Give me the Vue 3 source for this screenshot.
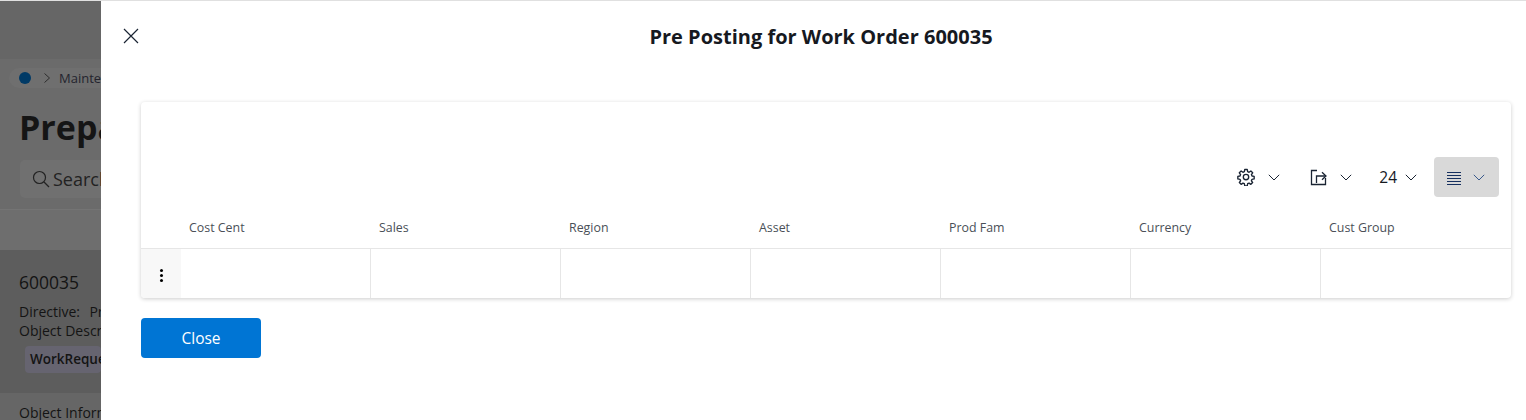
<script setup>
const columns = ['Cost Cent', 'Sales', 'Region', 'Asset', 'Prod Fam', 'Currency', 'Cust Group']
</script>

<template>
  <div class="page">
    <!-- dimmed page behind the drawer -->
    <div class="backdrop">
      <div class="bg-top">
        <div class="crumbs">
          <span class="home"></span>
          <svg class="crumb-arrow" width="8" height="12" viewBox="0 0 8 12"><path d="M1.5 1.5 6.5 6 1.5 10.5" fill="none" stroke="#2d2d2d" stroke-width="1"/></svg>
          <span class="crumb-text">Maintenance</span>
        </div>
        <div class="bg-title">Prepare</div>
        <div class="bg-search">
          <svg width="18" height="18" viewBox="0 0 18 18"><circle cx="7.5" cy="7.5" r="6" fill="none" stroke="#222" stroke-width="1.2"/><path d="M12 12l5 5" stroke="#222" stroke-width="1.2"/></svg>
          <span>Search</span>
        </div>
        <div class="bg-band"></div>
      </div>
      <div class="bg-card">
        <div class="bg-num">600035</div>
        <div class="bg-line first">Directive: &nbsp; Pre Posting</div>
        <div class="bg-line">Object Description</div>
        <div class="bg-tag">WorkRequest</div>
      </div>
      <div class="bg-bottom">Object Information</div>
    </div>

    <div class="drawer">
      <div class="header">
        <button class="close-x">
          <svg width="16" height="16" viewBox="0 0 16 16"><path d="M1 1l14 14M15 1 1 15" stroke="#1a2433" stroke-width="1.2" fill="none"/></svg>
        </button>
        <h1>Pre Posting for Work Order 600035</h1>
      </div>

      <div class="card">
        <div class="toolbar">
          <button class="tool gear">
            <svg width="18" height="18" viewBox="0 0 24 24" fill="none" stroke="#1a2433" stroke-width="1.8" stroke-linejoin="round"><circle cx="12" cy="12" r="3.6"/><path d="M10.3 2h3.4l.5 2.9 1.9.8 2.4-1.7 2.4 2.4-1.7 2.4.8 1.9 2.9.5v3.4l-2.9.5-.8 1.9 1.7 2.4-2.4 2.4-2.4-1.7-1.9.8-.5 2.9h-3.4l-.5-2.9-1.9-.8-2.4 1.7-2.4-2.4 1.7-2.4-.8-1.9-2.9-.5v-3.4l2.9-.5.8-1.9-1.7-2.4 2.4-2.4 2.4 1.7 1.9-.8z"/></svg>
            <svg class="chev" width="12" height="7" viewBox="0 0 12 7"><path d="M.8.8 6 6 11.2.8" fill="none" stroke="#1a2433" stroke-width="1"/></svg>
          </button>
          <button class="tool share">
            <svg width="17" height="17" viewBox="0 0 17 17" fill="none" stroke="#1a2433" stroke-width="1.3"><path d="M7 1.5H1.5v14h14V9"/><path d="M6.5 14V7h9"/><path d="M12 3.2 16 7l-4 3.8"/></svg>
            <svg class="chev" width="12" height="7" viewBox="0 0 12 7"><path d="M.8.8 6 6 11.2.8" fill="none" stroke="#1a2433" stroke-width="1"/></svg>
          </button>
          <button class="tool count">
            <span>24</span>
            <svg class="chev" width="12" height="7" viewBox="0 0 12 7"><path d="M.8.8 6 6 11.2.8" fill="none" stroke="#1a2433" stroke-width="1"/></svg>
          </button>
          <button class="tool density">
            <svg class="lines" width="14" height="14" viewBox="0 0 14 14" stroke="#16305f" stroke-width="1"><path d="M0 .5h14M0 3.5h14M0 6.5h14M0 9.5h14M0 12.5h14"/></svg>
            <svg class="chev" width="12" height="7" viewBox="0 0 12 7"><path d="M.8.8 6 6 11.2.8" fill="none" stroke="#3a5a8c" stroke-width="1"/></svg>
          </button>
        </div>

        <div class="table-row head">
          <div class="action-head"></div>
          <div v-for="col in columns" :key="col" class="th">{{ col }}</div>
        </div>
        <div class="table-row body">
          <div class="action-cell">
            <span class="dots"><i></i><i></i><i></i></span>
          </div>
          <div v-for="col in columns" :key="col" class="td"></div>
        </div>
      </div>

      <button class="close-btn">Close</button>
    </div>
  </div>
</template>

<style>
html, body {
  margin: 0;
  background: #fff;
}
</style>

<style scoped>
.page {
  display: flex;
  height: 420px;
  width: 1526px;
  overflow: hidden;
  font-family: "Open Sans", "Noto Sans", sans-serif;
  box-sizing: border-box;
  border-top: 1px solid #e0e0e0;
}

.backdrop {
  width: 101px;
  flex-shrink: 0;
  overflow: hidden;
  background: #666;
  white-space: nowrap;
  color: #141414;
}
.bg-top {
  height: 249px;
  box-sizing: border-box;
  padding-top: 67px;
  background: linear-gradient(#666 0, #666 58px, #6b6b6b 58px);
}
.crumbs {
  display: flex;
  align-items: center;
  height: 20px;
  margin-left: 9px;
  padding-left: 10px;
  border-radius: 10px 0 0 10px;
  background: #6f6f6f;
}
.home {
  flex-shrink: 0;
  width: 12px;
  height: 12px;
  border-radius: 50%;
  background: #003a66;
}
.crumb-arrow {
  flex-shrink: 0;
  margin-left: 12px;
}
.crumb-text {
  margin-left: 8px;
  font-size: 13px;
  color: #24242e;
}
.bg-title {
  margin: 15px 0 0 19px;
  font-size: 34px;
  font-weight: 700;
  line-height: 48px;
  color: #151515;
}
.bg-search {
  display: flex;
  align-items: center;
  gap: 3px;
  margin: 9px 0 0 20px;
  height: 38px;
  padding-left: 12px;
  border-radius: 5px 0 0 5px;
  background: #707070;
  font-size: 18px;
  color: #222;
}
.bg-search svg {
  flex-shrink: 0;
}
.bg-band {
  margin-top: 11px;
  height: 40px;
  border-top: 1px solid #747474;
  background: #6e6e6e;
}
.bg-card {
  height: 143px;
  box-sizing: border-box;
  padding: 20px 0 0 19px;
  background: #5d5d5d;
}
.bg-num {
  font-size: 17.5px;
  line-height: 24px;
}
.bg-line {
  font-size: 14px;
  line-height: 19px;
}
.bg-line.first {
  margin-top: 8px;
  word-spacing: -0.5px;
}
.bg-tag {
  margin: 6px 0 0 6px;
  padding: 0 5px;
  height: 27px;
  line-height: 27px;
  border-radius: 4px;
  background: #666470;
  font-size: 13.5px;
  font-weight: 600;
}
.bg-bottom {
  padding: 10px 0 0 19px;
  font-size: 14px;
  line-height: 19px;
}

.drawer {
  flex: 1;
  min-width: 0;
  background: #fff;
  padding-left: 40px;
  padding-right: 15px;
}

.header {
  display: flex;
  align-items: center;
  height: 70px;
  margin-left: -40px;
  padding-left: 22px;
}
.close-x {
  display: flex;
  width: 16px;
  height: 16px;
  padding: 0;
  border: 0;
  background: none;
}
h1 {
  flex: 1;
  margin: 0;
  padding-right: 8px;
  text-align: center;
  font-size: 20px;
  font-weight: 700;
  color: #16191f;
}

.card {
  margin-top: 31px;
  border-radius: 4px;
  box-shadow: 0 1px 4px rgba(0, 0, 0, 0.2);
  overflow: hidden;
}
.toolbar {
  display: flex;
  justify-content: flex-end;
  align-items: center;
  height: 106px;
  box-sizing: border-box;
  padding: 55px 12px 11px 0;
}
.tool {
  display: flex;
  align-items: center;
  height: 40px;
  padding: 0;
  border: 0;
  background: none;
  font-family: inherit;
  font-size: 15.5px;
  color: #16191f;
}
.gear svg:first-child {
  margin-right: 13px;
}
.share {
  margin-left: 30px;
}
.share svg:first-child {
  margin-right: 13px;
}
.count {
  margin-left: 27px;
}
.count span {
  margin-right: 8px;
}
.density {
  margin-left: 17px;
  width: 65px;
  box-sizing: border-box;
  padding-left: 13px;
  border-radius: 4px;
  background: #d9d9d9;
}
.density svg:first-child {
  margin-right: 12px;
}
.lines {
  margin-top: 3px;
}

.table-row {
  display: grid;
  grid-template-columns: 40px repeat(7, 190px);
}
.head {
  height: 41px;
  border-bottom: 1px solid #e6e6e6;
  box-sizing: border-box;
}
.th {
  padding: 10px 0 0 8px;
  font-size: 12.4px;
  line-height: 20px;
  color: #4a4f57;
}
.body {
  height: 49px;
}
.action-cell {
  display: flex;
  align-items: center;
  justify-content: center;
  box-sizing: border-box;
  padding-top: 4px;
  background: #f8f8f8;
}
.dots {
  display: flex;
  flex-direction: column;
  gap: 2px;
}
.dots i {
  width: 3px;
  height: 3px;
  border-radius: 50%;
  background: #000;
}
.td {
  border-right: 1px solid #e6e6e6;
}
.td:last-child {
  border-right: 0;
}

.close-btn {
  display: block;
  margin-top: 20px;
  width: 120px;
  height: 40px;
  border: 0;
  border-radius: 4px;
  background: #0075d4;
  color: #fff;
  font-family: inherit;
  font-size: 15.5px;
}
</style>
